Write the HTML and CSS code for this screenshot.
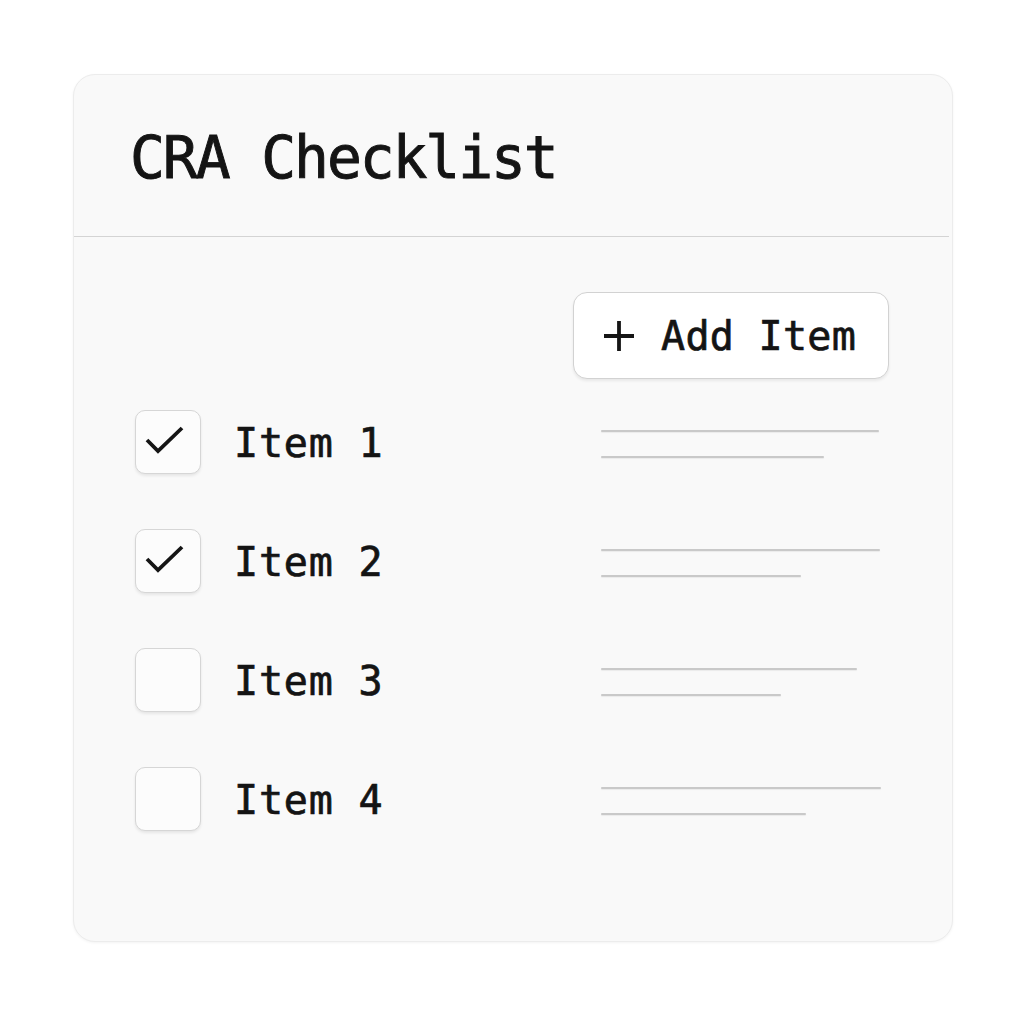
FILE: index.html
```html
<!DOCTYPE html>
<html lang="en">
<head>
<meta charset="utf-8">
<title>CRA Checklist</title>
<link rel="stylesheet" href="styles.css">
</head>
<body>
  <div class="card">
    <header class="card-header">
      <h1 class="title">CRA Checklist</h1>
    </header>
    <div class="card-body">
      <div class="toolbar">
        <button class="add-btn" type="button">
          <svg class="plus" width="32" height="32" viewBox="0 0 32 32" aria-hidden="true">
            <path d="M16 1 V31 M1 16 H31" stroke="#151515" stroke-width="3.8" fill="none"/>
          </svg>
          <span>Add Item</span>
        </button>
      </div>
      <ul class="list">
        <li class="row">
          <span class="box checked">
            <svg width="64" height="64" viewBox="0 0 64 64" aria-hidden="true"><path d="M12 30 L23 41 L47 18" stroke="#151515" stroke-width="3.8" fill="none"/></svg>
          </span>
          <span class="label">Item 1</span>
          <span class="lines"><i class="ln" style="width:278px"></i><i class="ln" style="width:223px"></i></span>
        </li>
        <li class="row">
          <span class="box checked">
            <svg width="64" height="64" viewBox="0 0 64 64" aria-hidden="true"><path d="M12 30 L23 41 L47 18" stroke="#151515" stroke-width="3.8" fill="none"/></svg>
          </span>
          <span class="label">Item 2</span>
          <span class="lines"><i class="ln" style="width:279px"></i><i class="ln" style="width:200px"></i></span>
        </li>
        <li class="row">
          <span class="box"></span>
          <span class="label">Item 3</span>
          <span class="lines"><i class="ln" style="width:256px"></i><i class="ln" style="width:180px"></i></span>
        </li>
        <li class="row">
          <span class="box"></span>
          <span class="label">Item 4</span>
          <span class="lines"><i class="ln" style="width:280px"></i><i class="ln" style="width:205px"></i></span>
        </li>
      </ul>
    </div>
  </div>
</body>
</html>
```
FILE: styles.css
```css
* { box-sizing: border-box; }
html, body { margin: 0; padding: 0; background: #ffffff; }
body {
  width: 1024px;
  height: 1024px;
  padding: 74px 0 0 73px;
  font-family: "DejaVu Sans Mono", "Liberation Mono", monospace;
  color: #141414;
}
.card {
  width: 880px;
  height: 868px;
  background: #f9f9f9;
  border: 1px solid #ececec;
  border-radius: 22px;
  box-shadow: 0 1px 3px rgba(0,0,0,0.05);
  overflow: hidden;
}
.card-header {
  height: 162px;
  display: flex;
  align-items: center;
  padding: 4px 0 0 56px;
  border-bottom: 1.5px solid #d4d4d4;
  margin-right: 3px;
}
.title {
  margin: 0;
  font-size: 58px;
  font-weight: 400;
  -webkit-text-stroke: 0.9px #141414;
  letter-spacing: -2.1px;
  line-height: 1;
}
.card-body {
  padding: 55px 63px 0 61px;
}
.toolbar {
  display: flex;
  justify-content: flex-end;
}
.add-btn {
  width: 316px;
  height: 87px;
  display: flex;
  align-items: center;
  gap: 26px;
  padding: 0 0 0 29px;
  background: #ffffff;
  border: 1.5px solid #d2d2d2;
  border-radius: 14px;
  box-shadow: 0 2px 3px rgba(0,0,0,0.07);
  font-family: inherit;
  font-size: 40px;
  letter-spacing: 0.3px;
  -webkit-text-stroke: 0.7px #141414;
  color: #141414;
}
.list {
  list-style: none;
  margin: 31px 0 0;
  padding: 0;
  display: flex;
  flex-direction: column;
  gap: 55px;
}
.row {
  height: 64px;
  display: flex;
  align-items: center;
}
.box {
  width: 66px;
  height: 64px;
  flex: none;
  background: #fcfcfc;
  border: 1.5px solid #d6d6d6;
  border-radius: 10px;
  box-shadow: 0 2px 3px rgba(0,0,0,0.08);
  position: relative;
}
.box svg { display: block; position: absolute; left: -1px; top: -1px; }
.label {
  margin-left: 33px;
  font-size: 40px;
  letter-spacing: 0.8px;
  -webkit-text-stroke: 0.7px #141414;
  width: 367px;
  flex: none;
  padding-top: 2px;
}
.lines {
  display: flex;
  flex-direction: column;
  gap: 24px;
  padding-top: 4px;
}
.ln {
  display: block;
  height: 2px;
  background: #c9c9c9;
  border-radius: 1px;
  box-shadow: 0 1px 1px rgba(0,0,0,0.06);
}
```
